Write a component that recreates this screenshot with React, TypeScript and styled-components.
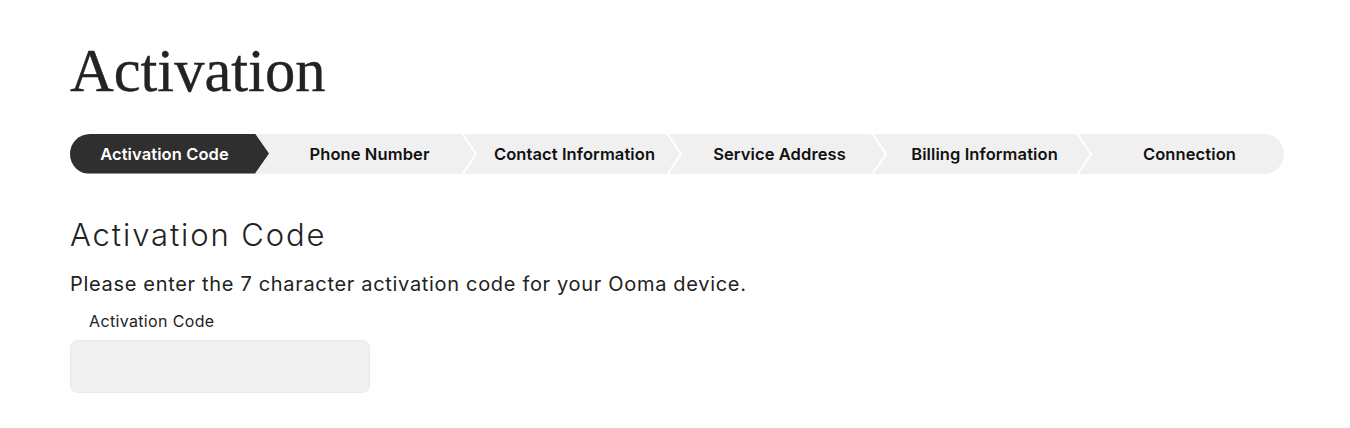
import styled, { createGlobalStyle } from 'styled-components';

const STEPS = [
  'Activation Code',
  'Phone Number',
  'Contact Information',
  'Service Address',
  'Billing Information',
  'Connection',
];

const GlobalStyle = createGlobalStyle`
  body {
    margin: 0;
    background: #ffffff;
    font-family: Inter, 'Liberation Sans', sans-serif;
    color: #222222;
  }
`;

const Page = styled.main`
  padding: 41px 70px 0 70px;
`;

const Title = styled.h1`
  margin: 0;
  font-family: 'Liberation Serif', serif;
  font-size: 60.5px;
  font-weight: 400;
  line-height: 1;
  color: #232323;
  -webkit-text-stroke: 0.4px #232323;
`;

const Stepper = styled.ol`
  display: flex;
  width: 1214px;
  height: 40px;
  margin: 32px 0 0 0;
  padding: 0;
  list-style: none;
  background: #f0f0f0;
  border-radius: 20px;
  overflow: hidden;
`;

const Step = styled.li<{ $active?: boolean; $last?: boolean }>`
  position: relative;
  box-sizing: border-box;
  flex: ${(p) => (p.$last ? '1 1 auto' : '0 0 205px')};
  display: flex;
  align-items: center;
  justify-content: center;
  padding-right: ${(p) => (p.$last ? '0' : '16px')};
  font-size: 16.5px;
  font-weight: 600;
  letter-spacing: 0.1px;
  white-space: nowrap;
  color: ${(p) => (p.$active ? '#ffffff' : '#111111')};
  background: ${(p) => (p.$active ? '#2f2f2f' : 'transparent')};
  clip-path: ${(p) =>
    p.$active
      ? 'polygon(0 0, calc(100% - 20px) 0, calc(100% - 6px) 50%, calc(100% - 20px) 100%, 0 100%)'
      : 'none'};
`;

const Chevron = styled.svg`
  position: absolute;
  top: 0;
  right: 0;
  width: 20px;
  height: 40px;
`;

const Heading = styled.h2`
  margin: 42px 0 0 0;
  font-size: 31px;
  font-weight: 300;
  line-height: 1.2;
  letter-spacing: 1.9px;
  color: #222222;
`;

const Intro = styled.p`
  margin: 19px 0 0 0;
  font-size: 20px;
  line-height: 1.2;
  letter-spacing: 0.68px;
  color: #222222;
`;

const Field = styled.label`
  display: flex;
  flex-direction: column;
  margin-top: 16px;
`;

const FieldLabel = styled.span`
  padding-left: 19px;
  font-size: 16px;
  line-height: 1.2;
  letter-spacing: 0.35px;
  color: #222222;
`;

const Input = styled.input`
  box-sizing: border-box;
  width: 300px;
  height: 53px;
  margin-top: 9px;
  padding: 0 18px;
  font-family: Inter, 'Liberation Sans', sans-serif;
  font-size: 16px;
  background: #f0f0f0;
  border: 1px solid #e9e9e9;
  border-radius: 8px;
  outline: none;
`;

export default function App() {
  return (
    <>
      <GlobalStyle />
      <Page>
        <Title>Activation</Title>
        <Stepper>
          {STEPS.map((step, i) => {
            const last = i === STEPS.length - 1;
            return (
              <Step key={step} $active={i === 0} $last={last}>
                {step}
                {!last && (
                  <Chevron viewBox="0 0 20 40" aria-hidden="true">
                    <polyline
                      points="2,-1 16,20 2,41"
                      fill="none"
                      stroke="#ffffff"
                      strokeWidth="2"
                    />
                  </Chevron>
                )}
              </Step>
            );
          })}
        </Stepper>
        <Heading>Activation Code</Heading>
        <Intro>Please enter the 7 character activation code for your Ooma device.</Intro>
        <Field>
          <FieldLabel>Activation Code</FieldLabel>
          <Input />
        </Field>
      </Page>
    </>
  );
}
